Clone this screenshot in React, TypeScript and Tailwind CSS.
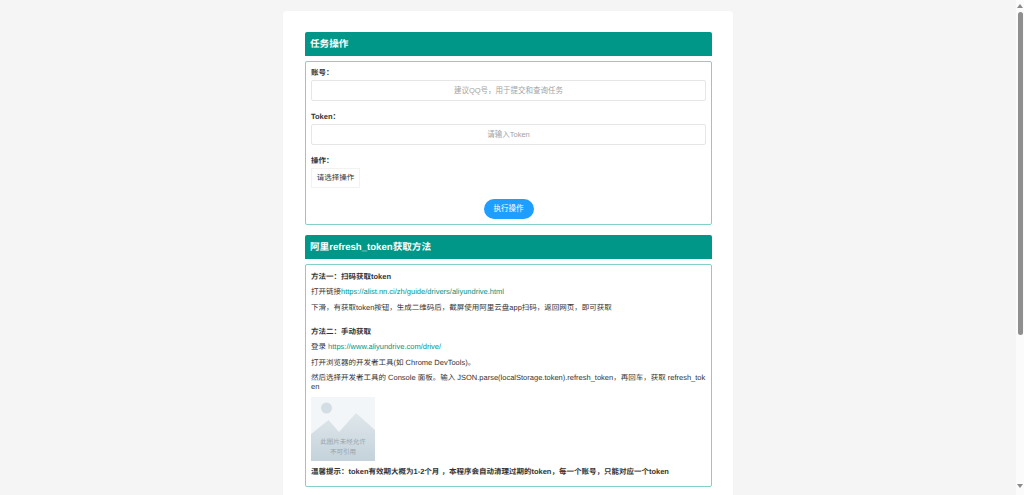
import React from "react";

const font = "font-['Liberation_Sans','Noto_Sans_CJK_SC',sans-serif] [text-rendering:geometricPrecision]";

function SectionTitle({ children }: { children: React.ReactNode }) {
  return (
    <h2 className="h-[24px] rounded-t-[2px] bg-[#009688] pl-[5px] text-[9.6px] leading-[26px] font-bold text-white">
      {children}
    </h2>
  );
}

function Field({ label, placeholder }: { label: string; placeholder: string }) {
  return (
    <div className="mb-[9px]">
      <div className="h-[14px] text-[7.5px] leading-[14px] font-bold text-[#333]">{label}</div>
      <input
        readOnly
        placeholder={placeholder}
        className="block h-[21px] w-full rounded-[2px] border border-[#e6e6e6] bg-white text-center text-[7.5px] outline-none placeholder:text-[#a3a3a3]"
      />
    </div>
  );
}

function Placeholder() {
  return (
    <div className="relative h-[64px] w-[64px] bg-[#f3f6f8]">
      <svg viewBox="0 0 64 64" className="absolute inset-0 h-full w-full">
        <defs>
          <linearGradient id="hill" x1="0" y1="0" x2="0" y2="1">
            <stop offset="0" stopColor="#dfe7eb" />
            <stop offset="1" stopColor="#c4d2db" />
          </linearGradient>
        </defs>
        <circle cx="15.5" cy="11" r="5.5" fill="#d3dee4" />
        <path d="M0 37 L17.5 23 L28 35 L45 16 L64 33 V64 H0 Z" fill="url(#hill)" />
      </svg>
      <div className="absolute inset-x-0 top-[41px] text-center text-[6.5px] leading-[9.5px] text-[#95a3ab]">
        此图片未经允许
        <br />
        不可引用
      </div>
    </div>
  );
}

export default function App() {
  return (
    <div className={`flex h-[495px] overflow-hidden bg-[#f5f5f5] ${font}`}>
      <main className="flex flex-1 justify-center pt-[11px]">
        <div className="h-[520px] w-[450px] rounded-[4px] bg-white pt-[21px] pr-[21px] pl-[22px]">
          <SectionTitle>任务操作</SectionTitle>
          <section className="mt-[5px] h-[164px] rounded-[2px] border border-[#84cfc7] px-[5px] pt-[4px]">
            <Field label="账号：" placeholder="建议QQ号，用于提交和查询任务" />
            <Field label="Token：" placeholder="请输入Token" />
            <div className="h-[14px] text-[7.5px] leading-[14px] font-bold text-[#333]">操作：</div>
            <div className="h-[20px] w-[49px] border border-[#f2f2f2] text-center text-[7.5px] leading-[18px] text-[#333]">
              请选择操作
            </div>
            <div className="mt-[11px] flex justify-center">
              <button className="h-[20px] w-[50px] rounded-full bg-[#1e9fff] text-[7.5px] text-white">执行操作</button>
            </div>
          </section>

          <div className="mt-[10px]">
            <SectionTitle>阿里refresh_token获取方法</SectionTitle>
          </div>
          <section className="mt-[5px] h-[223px] rounded-[2px] border border-[#84cfc7] px-[5px] pt-[6.5px] text-[7.5px] leading-[9px] text-[#333]">
            <p className="font-bold">方法一：扫码获取token</p>
            <p className="mt-[6.5px]">
              打开链接<span className="text-[#009688]">https://alist.nn.ci/zh/guide/drivers/aliyundrive.html</span>
            </p>
            <p className="mt-[6.5px]">下滑，有获取token按钮，生成二维码后，截屏使用阿里云盘app扫码，返回网页，即可获取</p>
            <p className="mt-[15px] font-bold">方法二：手动获取</p>
            <p className="mt-[6.5px]">
              登录 <span className="text-[#009688]">https://www.aliyundrive.com/drive/</span>
            </p>
            <p className="mt-[6.5px]">打开浏览器的开发者工具(如 Chrome DevTools)。</p>
            <p className="mt-[6.5px] break-all leading-[9.4px]">
              然后选择开发者工具的 Console 面板。输入 JSON.parse(localStorage.token).refresh_token，再回车，获取 refresh_token
            </p>
            <div className="mt-[5.5px]">
              <Placeholder />
            </div>
            <p className="mt-[6px] font-bold">温馨提示：token有效期大概为1-2个月 ，本程序会自动清理过期的token，每一个账号，只能对应一个token</p>
          </section>
        </div>
      </main>
      <div className="flex w-[8px] flex-col items-center bg-[#fbfbfb]">
        <div className="mt-[4px] h-0 w-0 border-x-[3px] border-b-[4px] border-x-transparent border-b-[#8a8a8a]" />
        <div className="mt-[4px] h-[323px] w-[5px] rounded-full bg-[#8f8f8f]" />
        <div className="mt-auto mb-[7px] h-0 w-0 border-x-[3px] border-t-[4px] border-x-transparent border-t-[#8a8a8a]" />
      </div>
    </div>
  );
}
